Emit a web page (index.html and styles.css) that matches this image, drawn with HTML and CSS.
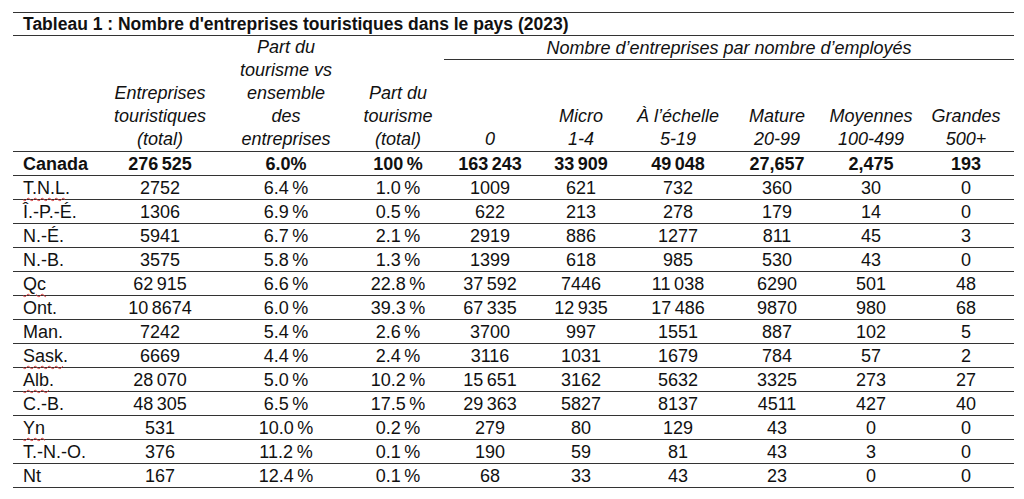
FILE: index.html
```html
<!DOCTYPE html>
<html lang="fr">
<head>
<meta charset="utf-8">
<title>Tableau 1</title>
<link rel="stylesheet" href="styles.css">
</head>
<body>
<table class="tbl">
  <colgroup>
    <col class="c0"><col class="c1"><col class="c2"><col class="c3"><col class="c4">
    <col class="c5"><col class="c6"><col class="c7"><col class="c8"><col class="c9">
  </colgroup>
  <thead>
    <tr class="title-row">
      <th colspan="10" class="title">Tableau 1 : Nombre d'entreprises touristiques dans le pays (2023)</th>
    </tr>
    <tr class="sub-row">
      <th rowspan="2" class="hd"></th>
      <th rowspan="2" class="hd">Entreprises<br>touristiques<br>(total)</th>
      <th rowspan="2" class="hd">Part du<br>tourisme vs<br>ensemble<br>des<br>entreprises</th>
      <th rowspan="2" class="hd">Part du<br>tourisme<br>(total)</th>
      <th colspan="6" class="group">Nombre d’entreprises par nombre d’employés</th>
    </tr>
    <tr class="col-row">
      <th class="hd">0</th>
      <th class="hd">Micro<br>1-4</th>
      <th class="hd">À l’échelle<br>5-19</th>
      <th class="hd">Mature<br>20-99</th>
      <th class="hd">Moyennes<br>100-499</th>
      <th class="hd">Grandes<br>500+</th>
    </tr>
  </thead>
  <tbody>
    <tr class="total">
      <td class="lbl">Canada</td><td>276&#8239;525</td><td>6.0%</td><td>100&#8239;%</td><td>163&#8239;243</td><td>33&#8239;909</td><td>49&#8239;048</td><td>27,657</td><td>2,475</td><td>193</td>
    </tr>
    <tr><td class="lbl"><span class="sp">T.N.L</span>.</td><td>2752</td><td>6.4&#8239;%</td><td>1.0&#8239;%</td><td>1009</td><td>621</td><td>732</td><td>360</td><td>30</td><td>0</td></tr>
    <tr><td class="lbl">Î.-P.-É.</td><td>1306</td><td>6.9&#8239;%</td><td>0.5&#8239;%</td><td>622</td><td>213</td><td>278</td><td>179</td><td>14</td><td>0</td></tr>
    <tr><td class="lbl">N.-É.</td><td>5941</td><td>6.7&#8239;%</td><td>2.1&#8239;%</td><td>2919</td><td>886</td><td>1277</td><td>811</td><td>45</td><td>3</td></tr>
    <tr><td class="lbl">N.-B.</td><td>3575</td><td>5.8&#8239;%</td><td>1.3&#8239;%</td><td>1399</td><td>618</td><td>985</td><td>530</td><td>43</td><td>0</td></tr>
    <tr><td class="lbl"><span class="sp">Qc</span></td><td>62&#8239;915</td><td>6.6&#8239;%</td><td>22.8&#8239;%</td><td>37&#8239;592</td><td>7446</td><td>11&#8239;038</td><td>6290</td><td>501</td><td>48</td></tr>
    <tr><td class="lbl">Ont.</td><td>10&#8239;8674</td><td>6.0&#8239;%</td><td>39.3&#8239;%</td><td>67&#8239;335</td><td>12&#8239;935</td><td>17&#8239;486</td><td>9870</td><td>980</td><td>68</td></tr>
    <tr><td class="lbl">Man.</td><td>7242</td><td>5.4&#8239;%</td><td>2.6&#8239;%</td><td>3700</td><td>997</td><td>1551</td><td>887</td><td>102</td><td>5</td></tr>
    <tr><td class="lbl"><span class="sp">Sask</span>.</td><td>6669</td><td>4.4&#8239;%</td><td>2.4&#8239;%</td><td>3116</td><td>1031</td><td>1679</td><td>784</td><td>57</td><td>2</td></tr>
    <tr><td class="lbl"><span class="sp">Alb</span>.</td><td>28&#8239;070</td><td>5.0&#8239;%</td><td>10.2&#8239;%</td><td>15&#8239;651</td><td>3162</td><td>5632</td><td>3325</td><td>273</td><td>27</td></tr>
    <tr><td class="lbl">C.-B.</td><td>48&#8239;305</td><td>6.5&#8239;%</td><td>17.5&#8239;%</td><td>29&#8239;363</td><td>5827</td><td>8137</td><td>4511</td><td>427</td><td>40</td></tr>
    <tr><td class="lbl"><span class="sp">Yn</span></td><td>531</td><td>10.0&#8239;%</td><td>0.2&#8239;%</td><td>279</td><td>80</td><td>129</td><td>43</td><td>0</td><td>0</td></tr>
    <tr><td class="lbl">T.-N.-O.</td><td>376</td><td>11.2&#8239;%</td><td>0.1&#8239;%</td><td>190</td><td>59</td><td>81</td><td>43</td><td>3</td><td>0</td></tr>
    <tr><td class="lbl">Nt</td><td>167</td><td>12.4&#8239;%</td><td>0.1&#8239;%</td><td>68</td><td>33</td><td>43</td><td>23</td><td>0</td><td>0</td></tr>
  </tbody>
</table>
</body>
</html>
```

FILE: styles.css
```css
html, body {
  margin: 0;
  padding: 0;
  background: #ffffff;
}

body {
  padding: 12px 0 0 13px;
  font-family: "Liberation Sans", Arial, sans-serif;
  color: #111111;
}

.tbl {
  width: 1001px;
  table-layout: fixed;
  border-collapse: collapse;
  font-size: 18px;
}

.c0 { width: 87px; }
.c1 { width: 120px; }
.c2 { width: 132px; }
.c3 { width: 92px; }
.c4 { width: 92px; }
.c5 { width: 90px; }
.c6 { width: 104px; }
.c7 { width: 94px; }
.c8 { width: 94px; }
.c9 { width: 96px; }

.tbl th,
.tbl td {
  padding: 0;
  text-align: center;
  white-space: nowrap;
}

.title-row {
  height: 23px;
}

.title-row th {
  border-top: 1px solid #333;
  border-bottom: 1px solid #333;
  text-align: left;
  padding-left: 10px;
  font-size: 17.5px;
  line-height: 20px;
  font-weight: bold;
  vertical-align: middle;
}

.sub-row { height: 24px; }

.group {
  font-style: italic;
  font-weight: normal;
  line-height: 20px;
  border-bottom: 1px solid #333;
  vertical-align: middle;
}

.col-row { height: 92px; }

.hd {
  font-style: italic;
  font-weight: normal;
  line-height: 23px;
  vertical-align: bottom;
}

tbody tr {
  height: 24px;
}

thead tr.col-row th,
thead tr.sub-row th.hd {
  border-bottom: 1px solid #333;
}

tbody td {
  border-bottom: 1px solid #333;
  line-height: 20px;
  vertical-align: middle;
}

tbody tr.total td {
  font-weight: bold;
}

.tbl td.lbl {
  text-align: left;
  padding-left: 10px;
}

.sp {
  text-decoration: underline wavy #d63a3a;
  text-decoration-thickness: 1px;
  text-underline-offset: 3px;
}
```
